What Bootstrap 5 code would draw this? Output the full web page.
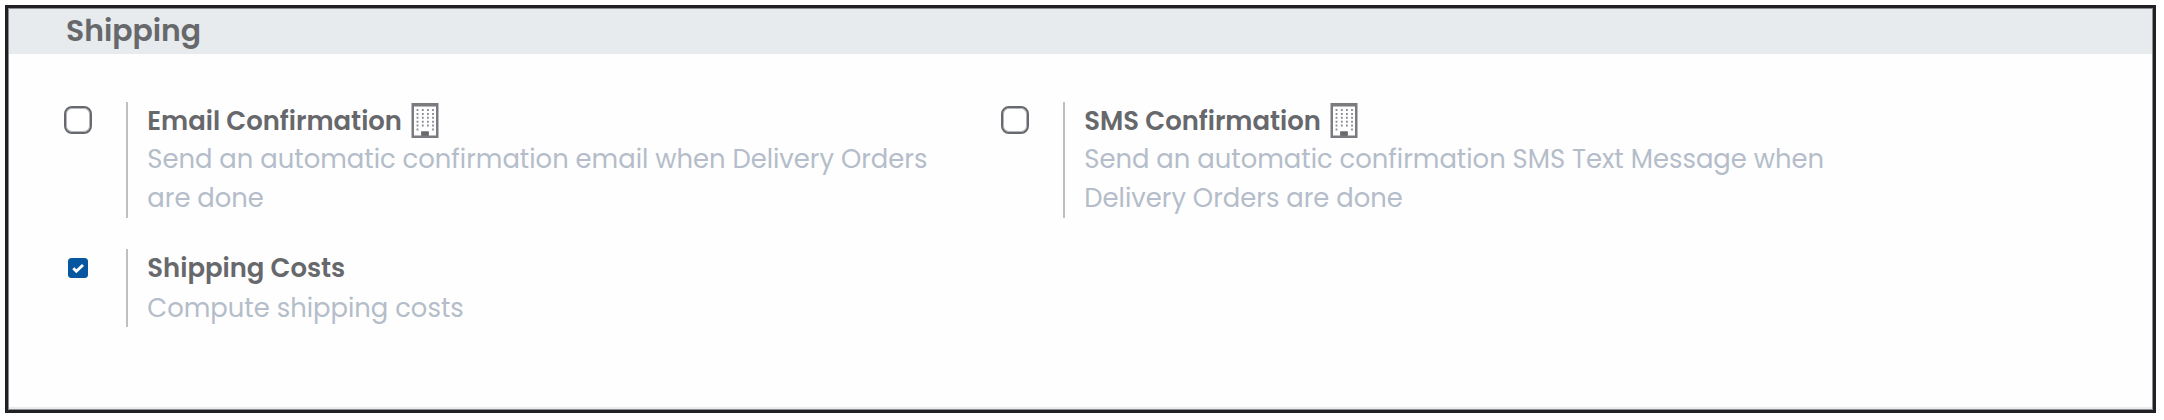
<!DOCTYPE html>
<html lang="en">
<head>
<meta charset="utf-8">
<title>Shipping settings</title>
<link href="https://cdn.jsdelivr.net/npm/bootstrap@5.3.0/dist/css/bootstrap.min.css" rel="stylesheet">
<style>
body{background:#fff;font-family:Poppins,Inter,sans-serif;height:420px;padding:5px 8px 7px 5px;overflow:hidden}
.panel{border:3px solid #202125;box-shadow:inset 0 0 0 1px #8b8d90,inset 0 -3px 0 #e9ebed;background:#fefefe;height:408px;padding:1px}
.panel-head{background:#e7ebed;height:45px;padding-left:57px;font-size:29.9px;font-weight:600;line-height:43px;color:#67686c;margin:0}
.settings{padding:48px 0 0 55px}
.setting{width:937px}
.setting-box{width:62px}
.setting-body{border-left:2px solid #bfbfbf;padding-left:19.3px;width:850px}
.setting-title{font-size:25.9px;font-weight:600;line-height:38px;height:38px;color:#67686c;white-space:nowrap;margin:0}
.setting-text{font-size:25.83px;line-height:39px;color:#b4bdc9;margin:0;white-space:nowrap}
.first-row .setting-body{height:116px}
.setting-title svg{margin:-1px 0 0 9.5px;flex:none}
.form-check-input.setting-check{width:28px;height:28px;margin:4px 0 0;border:2px solid #68696c;box-shadow:inset 0 0 0 1px #b3b6bd;border-radius:8px;background-color:#fff}
.form-check-input.setting-check:checked{width:20px;height:20px;margin:9px 0 0 4px;border:0;box-shadow:none;border-radius:3.5px;background-color:#0656a0;background-image:none}
.tick{position:absolute;left:4px;top:9px;pointer-events:none}
.second-row{margin-top:31px}
.second-row .setting-body{height:78px}
.second-row .setting-text{padding-top:2px}
</style>
</head>
<body>
<svg class="d-none"><symbol id="building" viewBox="0 0 28 35">
<path fill="#7b7a7f" fill-rule="evenodd" d="M.5 0h27v35H.5zM3 3.5v29h7.3v-4h7.4v4H25v-29z"/>
<path fill="#68686d" d="M10.3 28.5h7.4v4h-7.4z"/>
<path stroke="#8d8e94" stroke-width="1.8" stroke-dasharray="2 1.9" fill="none" d="M6.5 6v21.5M11.8 6v17.5M16.9 6v17.5M22 6v21.5"/>
</symbol></svg>
<main class="panel">
<h2 class="panel-head">Shipping</h2>
<div class="settings">
<div class="d-flex first-row">
<div class="setting d-flex">
<div class="setting-box"><input class="form-check-input setting-check" type="checkbox" aria-label="Email Confirmation"></div>
<div class="setting-body"><h3 class="setting-title d-flex align-items-center">Email Confirmation<svg width="28" height="35"><use href="#building"/></svg></h3>
<p class="setting-text">Send an automatic confirmation email when Delivery Orders<br>are done</p></div>
</div>
<div class="setting d-flex">
<div class="setting-box"><input class="form-check-input setting-check" type="checkbox" aria-label="SMS Confirmation"></div>
<div class="setting-body"><h3 class="setting-title d-flex align-items-center">SMS Confirmation<svg width="28" height="35"><use href="#building"/></svg></h3>
<p class="setting-text">Send an automatic confirmation SMS Text Message when<br>Delivery Orders are done</p></div>
</div>
</div>
<div class="setting d-flex second-row">
<div class="setting-box position-relative"><input class="form-check-input setting-check" type="checkbox" aria-label="Shipping Costs" checked>
<svg class="tick" width="20" height="20" viewBox="0 0 20 20"><path d="M5.3 10.3l3 3 6.7-6.3" fill="none" stroke="#fff" stroke-width="2.8"/></svg></div>
<div class="setting-body"><h3 class="setting-title">Shipping Costs</h3>
<p class="setting-text">Compute shipping costs</p></div>
</div>
</div>
</main>
<script src="https://cdn.jsdelivr.net/npm/bootstrap@5.3.0/dist/js/bootstrap.bundle.min.js"></script>
</body>
</html>
